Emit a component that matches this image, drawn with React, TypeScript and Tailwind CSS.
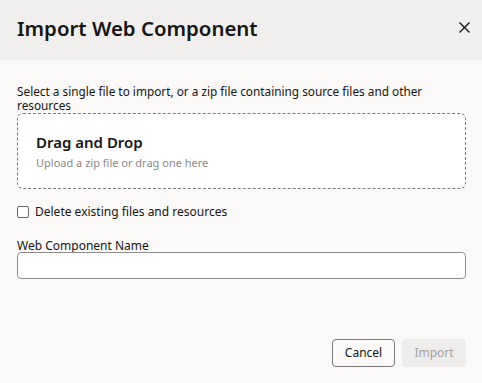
import React from "react";

export default function App() {
  return (
    <div className="w-[482px] h-[383px] bg-[#faf9f8] flex flex-col" style={{ fontFamily: '"Noto Sans", "Open Sans", sans-serif' }}>
      <div className="h-[60px] bg-[#f1efed] flex items-center justify-between pl-[17px] pr-[12px] shrink-0">
        <h1 className="text-[20.4px] font-semibold text-[#161513] leading-none mb-[3px]">Import Web Component</h1>
        <svg className="mb-[5px] text-[#161513]" width="11" height="11" viewBox="0 0 11 11" fill="none" stroke="currentColor" strokeWidth="1.4">
          <path d="M0.5 0.5L10.5 10.5M10.5 0.5L0.5 10.5" />
        </svg>
      </div>
      <div className="flex flex-col pl-[17px] pr-[16px] pt-[24px] flex-1">
        <p className="text-[11.8px] leading-[14px] text-[#161513]">
          Select a single file to import, or a zip file containing source files and other resources
        </p>
        <div className="mt-[1px] h-[76px] bg-white border border-dashed border-[#7b7977] rounded-[6px] pl-[18px] pt-[18px]">
          <div className="text-[15px] font-semibold text-[#161513] leading-[20px]">Drag and Drop</div>
          <div className="text-[11px] text-[#8a8886] mt-[4px] leading-[14px]">Upload a zip file or drag one here</div>
        </div>
        <label className="flex items-center mt-[16px] gap-[6px] text-[12px] leading-[14px] text-[#161513]">
          <span className="w-[12px] h-[12px] border border-[#6b6967] rounded-[2px] bg-white" />
          Delete existing files and resources
        </label>
        <div className="mt-[21px] text-[12px] leading-[12px] text-[#161513]">Web Component Name</div>
        <input className="h-[27px] w-full bg-white border border-[#8f8d8b] rounded-[4px]" />
        <div className="flex-1" />
        <div className="flex justify-end gap-[7px] pb-[16px]">
          <button className="h-[28px] w-[63px] border border-[#7b7977] rounded-[4px] text-[12px] text-[#161513] bg-[#faf9f8]">Cancel</button>
          <button className="h-[28px] w-[64px] rounded-[4px] text-[12px] text-[#a3a19f] bg-[#efedeb]">Import</button>
        </div>
      </div>
    </div>
  );
}
